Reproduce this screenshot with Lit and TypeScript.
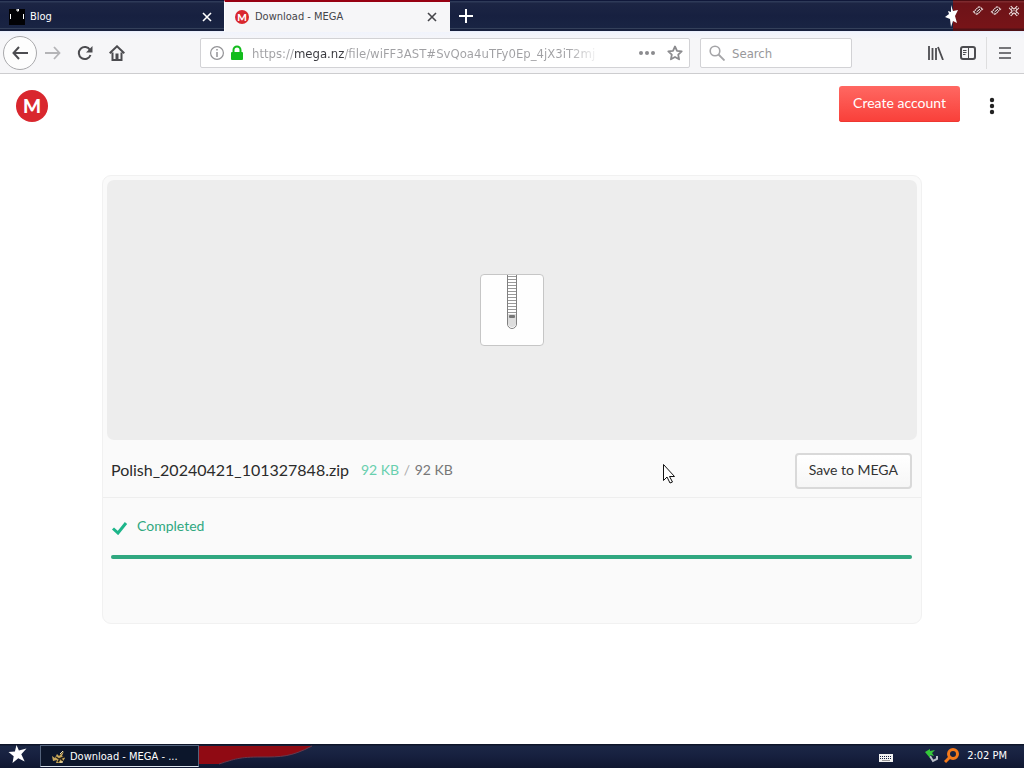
import { LitElement, html, css, svg } from "lit";
import { customElement, property } from "lit/decorators.js";

const star = svg`<path d="M9 0l2.400 5.400 7.600-2-5.200 5.800 3.400 7.200-6.400-3.200L5 18l1.200-6.800L1 7l6.400-.6z" fill="#fff"/>`;

@customElement("mega-logo")
class MegaLogo extends LitElement {
  static styles = css`
    :host { display: block; flex: none; width: 32px; height: 32px; }
    :host([small]) { width: 14px; height: 14px; }
    svg { display: block; width: 100%; height: 100%; }
    text { font: 900 19px Lato, sans-serif; fill: #fff; text-anchor: middle; }
    :host([small]) text { font-size: 23px; }
  `;
  @property({ type: Boolean, reflect: true }) small = false;
  render() {
    return html`<svg viewBox="0 0 32 32" role="img" aria-label="MEGA">
      <circle cx="16" cy="16" r="16" fill="#d9272e" />
      <text x="16" y=${this.small ? 24 : 23}>M</text>
    </svg>`;
  }
}

@customElement("browser-tabs")
class BrowserTabs extends LitElement {
  static styles = css`
    :host {
      display: flex; height: 32px; box-sizing: border-box;
      background: linear-gradient(#10183a 0 1px, #2e3a58 1px 2px, #1c2544 3px, #172040 50%, #192443 28px, #34405a 28px 29px, #161f3c 29px 31px, #e9eefb 31px);
      font: 11px/16px "DejaVu Sans Condensed", "DejaVu Sans", sans-serif; font-stretch: condensed;
    }
    button { border: 0; padding: 0; background: none; color: inherit; font: inherit; display: flex; align-items: center; justify-content: center; }
    svg { display: block; }
    .tab { display: flex; align-items: center; flex: 0 1 226px; box-sizing: border-box; padding: 2px 10px 0 9px; color: #fff; height: 32px; }
    .tab.first { flex-basis: 224px; padding-right: 9px; }
    .tab.first .title { padding-left: 5px; }
    .tab.active { background: #f6f6f8; color: #45454a; border-top: 2px solid #970012; padding: 0 10px 0 10px; border-left: 1px solid #fff; }
    .title { flex: 1; padding-left: 6px; white-space: nowrap; }
    .close { width: 16px; height: 16px; }
    .add { width: 32px; height: 32px; color: #fff; }
    .space { flex: 1; }
    .corner { display: flex; width: 71px; background: linear-gradient(#4d0d12 0 1px, #7e2a2e 1px 2px, #6d1318 3px, #771418 28px, #4f1116 29px 31px, #e9eefb 31px); padding-top: 5px; box-sizing: border-box; justify-content: flex-end; gap: 2px; padding-right: 2px; }
    .corner button { width: 16px; height: 12px; }
    .star { align-self: center; margin-right: -6px; z-index: 1; }
  `;
  render() {
    const x = svg`<path d="M1 1l8 8M9 1l-8 8" fill="none" stroke="currentColor" stroke-width="1.600"/>`;
    const diamond = svg`<path d="M1.500 7L7 1.500 10.500 4 5 9.500z" fill="#4a0f14" stroke="#f0dede" stroke-width="1.200" stroke-dasharray="1.500 .5"/><path d="M4.500 7L8 4" stroke="#fff"/>`;
    return html`
      <div class="tab first">
        <svg width="16" height="16" viewBox="0 0 16 16" aria-hidden="true"><path d="M0 0h16v16H0z" fill="#020205"/><path d="M1.500 5v5M14.500 5v5M8 0h1.500v2H8z" stroke="#fff"/></svg>
        <span class="title">Blog</span>
        <button class="close" aria-label="Close Blog tab"><svg width="10" height="10">${x}</svg></button>
      </div>
      <div class="tab active">
        <mega-logo small></mega-logo>
        <span class="title">Download - MEGA</span>
        <button class="close" aria-label="Close Download tab"><svg width="10" height="10">${x}</svg></button>
      </div>
      <button class="add" aria-label="New tab"><svg width="14" height="14"><path d="M7 0v14M0 7h14" stroke="currentColor" stroke-width="2"/></svg></button>
      <span class="space"></span>
      <svg class="star" width="15" height="24" viewBox="0 0 15 24" aria-hidden="true"><path d="M7 1l2 6 5-1-3 6 2 7-4-2-2 6-1-8-5-2 4-3-1-3 3 1z" fill="#fff"/></svg>
      <div class="corner">
        <button aria-label="Minimize"><svg width="12" height="12">${diamond}</svg></button>
        <button aria-label="Restore"><svg width="12" height="12">${diamond}</svg></button>
        <button aria-label="Close window"><svg width="12" height="12"><path d="M2 2l8 8M10 2l-8 8" stroke="#f0dede" stroke-width="3.500"/><path d="M2 2l8 8M10 2l-8 8" stroke="#5c1015" stroke-width="1.500" stroke-dasharray="2 1"/></svg></button>
      </div>`;
  }
}

@customElement("browser-toolbar")
class BrowserToolbar extends LitElement {
  static styles = css`
    :host {
      display: flex; align-items: center; height: 42px; box-sizing: border-box;
      background: linear-gradient(#f0f3fc, #f6f6f8 8px); border-bottom: 1px solid #cdcdcf; padding: 0 3px; color: #4c4c50;
      font: 13px/18px "DejaVu Sans Condensed", "DejaVu Sans", sans-serif; font-stretch: condensed;
    }
    button { flex: none; border: 0; padding: 0; background: none; color: inherit; width: 32px; height: 32px; display: flex; align-items: center; justify-content: center; }
    svg { display: block; flex: none; }
    .back { width: 34px; height: 34px; border: 1px solid #a9a9ac; border-radius: 50%; background: #fdfdfd; box-sizing: border-box; }
    .off { color: #b4b4b7; }
    .box { display: flex; align-items: center; box-sizing: border-box; height: 30px; background: #fff; border: 1px solid #d2d2d5; border-radius: 2px; }
    .url { flex: 1; margin-left: 67px; padding: 0 0 0 9px; }
    .lock { margin: 0 8px 0 6px; }
    .url button { width: 28px; height: 28px; color: #8b8b8e; }
    .find { width: 152px; margin-left: 10px; padding: 0 8px; gap: 7px; }
    input { flex: 1; min-width: 0; width: 0; border: 0; padding: 2px 0 0; outline: 0; font: inherit; font-stretch: condensed; }
    .address {
      color: transparent; height: 20px;
      background: linear-gradient(90deg, #a0a0a3 43px, #38383d 43px 92px, #a0a0a3 92px 315px, transparent 348px) text;
      -webkit-background-clip: text;
    }
    .find input { background: none; }
    .find input::placeholder { color: #98989b; opacity: 1; }
    .tools { display: flex; align-items: center; margin-left: 68px; margin-right: -1px; }
    .menu { border-left: 1px solid #dededf; width: 36px; margin-left: 2px; }
  `;
  render() {
    return html`
      <button class="back" aria-label="Back"><svg width="16" height="14"><path d="M7 1L1.500 7 7 13M2 7h14" fill="none" stroke="currentColor" stroke-width="2"/></svg></button>
      <button class="off" aria-label="Forward"><svg width="16" height="14"><path d="M9 1l5.500 6L9 13M14 7H0" fill="none" stroke="currentColor" stroke-width="1.800"/></svg></button>
      <button aria-label="Reload"><svg width="16" height="16"><path d="M13 5A6 6 0 1 0 13.500 10" fill="none" stroke="currentColor" stroke-width="2"/><path d="M15.500 1v6.500H9z" fill="currentColor"/></svg></button>
      <button aria-label="Home"><svg width="16" height="16"><path d="M.7 8.300L8 1.300l7.300 7M3.500 7.500V15h9V7.500" fill="none" stroke="currentColor" stroke-width="2"/><path d="M6.500 8.500h3V15h-3z" fill="currentColor"/></svg></button>
      <div class="box url">
        <svg width="14" height="14"><circle cx="7" cy="7" r="6.400" fill="none" stroke="#939396" stroke-width="1.200"/><path d="M7 6v5M7 3v1.600" stroke="#939396" stroke-width="1.500"/></svg>
        <svg class="lock" width="14" height="16"><path d="M3.500 7V5a3.500 3.500 0 0 1 7 0v2" fill="none" stroke="#12bc1c" stroke-width="2"/><rect x="1" y="7" width="12" height="8" rx="1" fill="#12bc1c"/></svg>
        <input class="address" type="text" aria-label="Address" value="https://mega.nz/file/wiFF3AST#SvQoa4uTFy0Ep_4jX3iT2mj" />
        <button aria-label="Page actions"><svg width="16" height="4"><g fill="currentColor"><circle cx="2" cy="2" r="2"/><circle cx="8" cy="2" r="2"/><circle cx="14" cy="2" r="2"/></g></svg></button>
        <button aria-label="Bookmark this page"><svg width="16" height="16"><path d="M8 1.500l2 4.300 4.700.6-3.500 3.200.9 4.700L8 12l-4.100 2.300.9-4.700L1.300 6.400 6 5.800z" fill="none" stroke="currentColor" stroke-width="1.800" stroke-linejoin="round"/></svg></button>
      </div>
      <label class="box find">
        <svg width="16" height="16"><circle cx="6" cy="6" r="4.800" fill="none" stroke="#a4a4a7" stroke-width="1.600"/><path d="M9.500 9.500l6 6" stroke="#a4a4a7" stroke-width="1.800"/></svg>
        <input type="text" placeholder="Search" aria-label="Search" />
      </label>
      <div class="tools">
        <button aria-label="Library"><svg width="16" height="14"><path d="M1 0v14M4.500 2v12M8 2v12M10 1l5 13" fill="none" stroke="currentColor" stroke-width="1.800"/></svg></button>
        <button aria-label="Sidebars"><svg width="16" height="14"><rect x="1" y="1" width="14" height="12" rx="2" fill="none" stroke="currentColor" stroke-width="2"/><path d="M8.500 1v12M3 4.500h3.500M3 6.500h3.500M3 8.500h2.500" stroke="currentColor"/></svg></button>
        <button class="menu" aria-label="Menu"><svg width="12" height="12"><path d="M0 1h12M0 6h12M0 11h12" stroke="currentColor" stroke-width="1.600"/></svg></button>
      </div>`;
  }
}

@customElement("download-card")
class DownloadCard extends LitElement {
  @property() name = "Polish_20240421_101327848.zip";
  @property({ type: Number }) done = 92;
  @property({ type: Number }) total = 92;
  static styles = css`
    :host { display: block; box-sizing: border-box; min-height: 449px; border: 1px solid #f1f1f1; border-radius: 9px; background: #fafafa; padding: 4px; font: 14px/20px Lato, sans-serif; color: #333; }
    .preview { height: 260px; border-radius: 7px; background: #ededed; display: flex; align-items: center; justify-content: center; }
    .info { display: flex; align-items: center; height: 57px; margin: 0 -4px; padding: 0 9px 0 8px; border-bottom: 1px solid #eee; }
    .info > * { margin-top: 4px; }
    .file { font-size: 16px; font-weight: 400; margin: 2px 12px 0 0; line-height: 20px; color: #2b2b2b; }
    .size { flex: 1; margin-top: 2px; color: #777; }
    .got { color: #68cfae; }
    .slash { color: #aaa; margin: 0 1px; }
    .save { height: 36px; box-sizing: border-box; border: 2px solid #d9d9d9; border-radius: 4px; background: linear-gradient(#fff, #f6f6f6); color: #333; font: inherit; padding: 0 12px 2px; }
    .status { display: flex; align-items: center; gap: 9px; margin: 18px 4px 19px; color: #2fa87f; }
    .status svg { margin-top: 4px; }
    .bar { height: 4px; margin: 0 5px 0 4px; border-radius: 2px; background: #e5e5e5; }
    .fill { height: 4px; border-radius: 2px; background: #30a880; }
    svg { display: block; }
  `;
  render() {
    const pct = (this.done / this.total) * 100;
    const teeth = Array.from({ length: 13 }, (_, i) => svg`<path d=${`M28 ${2.5 + i * 3}h8`} stroke="#999"/>`);
    return html`
      <div class="preview">
        <svg width="64" height="72" role="img" aria-label="Zip archive">
          <rect x=".5" y=".5" width="63" height="71" rx="3.500" fill="#fefefe" stroke="#c6c6c6"/>
          <path d="M27.500 1v49a4.500 4.500 0 0 0 9 0V1" fill="#fff" stroke="#808080"/>
          ${teeth}
          <path d="M28 40h8v9a4 4 0 0 1-8 0z" fill="#ddd"/><rect x="29" y="41" width="6" height="3" rx="1" fill="#777"/>
        </svg>
      </div>
      <div class="info">
        <h1 class="file">${this.name}</h1>
        <span class="size"><span class="got">${this.done} KB</span> <span class="slash">/</span> ${this.total} KB</span>
        <button class="save">Save to MEGA</button>
      </div>
      <div class="status">
        <svg width="17" height="14"><path d="M2 7.500l5 4.500 8-10" fill="none" stroke="#1db58a" stroke-width="3"/></svg>
        <span>Completed</span>
      </div>
      <div class="bar" role="progressbar" aria-label="Download progress" aria-valuenow=${pct}><div class="fill" style="width:${pct}%"></div></div>`;
  }
}

@customElement("task-bar")
class TaskBar extends LitElement {
  static styles = css`
    :host { display: flex; align-items: center; height: 24px; background: linear-gradient(#0e1529 0 1px, #1b2745 2px, #17203f 50%, #0f1730); color: #fff; font: 11px/16px "DejaVu Sans Condensed", "DejaVu Sans", sans-serif; font-stretch: condensed; }
    button { border: 0; padding: 0; background: none; color: inherit; font: inherit; font-stretch: condensed; display: flex; align-items: center; }
    svg { display: block; flex: none; }
    .start { width: 40px; padding: 0 0 3px 7px; }
    .task { width: 159px; height: 22px; box-sizing: border-box; border: 1px solid #53637c; border-bottom-color: #dbe4ee; background: #0c162b; padding: 2px 0 0 10px; gap: 4px; white-space: nowrap; }
    .wave { align-self: stretch; }
    .space { flex: 1; }
    .tray { display: flex; align-items: center; gap: 5px; padding-right: 17px; }
    .keys { margin: 4px 27px 0 0; }
    .clock { padding-left: 3px; }
  `;
  render() {
    return html`
      <button class="start" aria-label="Start"><svg width="21" height="20" viewBox="0 0 20 20">${star}</svg></button>
      <button class="task">
        <svg width="15" height="14" aria-hidden="true"><path d="M1 6l3 2 2-4 2 2 5-5-2 5 3 2-3 5H5l1-3-4 1z" fill="#c7a75a"/><path d="M5 7l3 2 5-2M7 12l2-3M12 11l-2-2" fill="none" stroke="#26231c" stroke-width="1.500"/><path d="M9 4l3-3M9 12h3" stroke="#eee1b3"/></svg>
        <span>Download - MEGA - ...</span>
      </button>
      <svg class="wave" width="116" height="24" aria-hidden="true"><path d="M0 2h113C92 13 82 13 62 13 40 13 36 15 20 20H0z" fill="#900a13"/><path d="M113 2C92 13 82 13 62 13 40 13 36 15 20 20" fill="none" stroke="#65394d"/></svg>
      <span class="space"></span>
      <div class="tray">
        <svg class="keys" width="14" height="8" aria-label="Keyboard"><rect width="14" height="8" fill="#f2f2f2"/><path d="M1 2.500h12M1 4.500h12" stroke="#17203f" stroke-dasharray="1 1"/><path d="M3 6.500h8" stroke="#999"/></svg>
        <svg width="14" height="14" aria-hidden="true"><path d="M5 7l3 5 4-2V7" fill="none" stroke="#b9bec8" stroke-width="2"/><path d="M0 3l5-3v2l5-1-3 3 2 3-4-1v3z" fill="#35c83a"/></svg>
        <svg width="15" height="16" aria-hidden="true"><circle cx="9" cy="6" r="4.500" fill="none" stroke="#f47a1b" stroke-width="3"/><path d="M6 9l-5 5" stroke="#f47a1b" stroke-width="3"/></svg>
        <span class="clock">2:02 PM</span>
      </div>`;
  }
}

@customElement("app-root")
class AppRoot extends LitElement {
  static styles = css`
    :host { display: flex; flex-direction: column; min-height: 100vh; background: #fff; position: relative; }
    header { display: flex; align-items: center; justify-content: space-between; height: 64px; padding: 0 20px 0 16px; }
    .actions { display: flex; align-items: center; gap: 20px; padding-bottom: 4px; }
    button { border: 0; padding: 0; }
    .create { height: 36px; padding: 0 14px 2px; border-radius: 3px; background: linear-gradient(#ff6862, #f93f39); color: #fff; font: 14px/20px Lato, sans-serif; box-shadow: inset 0 -1px #ee3731; }
    .more { width: 24px; height: 32px; background: none; display: flex; align-items: center; justify-content: center; margin-top: 4px; }
    main { flex: 1; padding: 37px 16px; }
    download-card { max-width: 820px; margin: 0 auto; }
    .cursor { position: absolute; left: 663px; top: 464px; }
  `;
  render() {
    return html`
      <browser-tabs></browser-tabs>
      <browser-toolbar></browser-toolbar>
      <header>
        <mega-logo></mega-logo>
        <div class="actions">
          <button class="create">Create account</button>
          <button class="more" aria-label="More options"><svg width="6" height="18"><g fill="#222"><circle cx="3" cy="3" r="2.200"/><circle cx="3" cy="9" r="2.200"/><circle cx="3" cy="15" r="2.200"/></g></svg></button>
        </div>
      </header>
      <main><download-card></download-card></main>
      <task-bar></task-bar>
      <svg class="cursor" width="13" height="20" aria-hidden="true"><path d="M.5.5v16l3.500-3.500 3 6 2.500-1-3-5.500h5z" fill="#fff" stroke="#111"/></svg>`;
  }
}
